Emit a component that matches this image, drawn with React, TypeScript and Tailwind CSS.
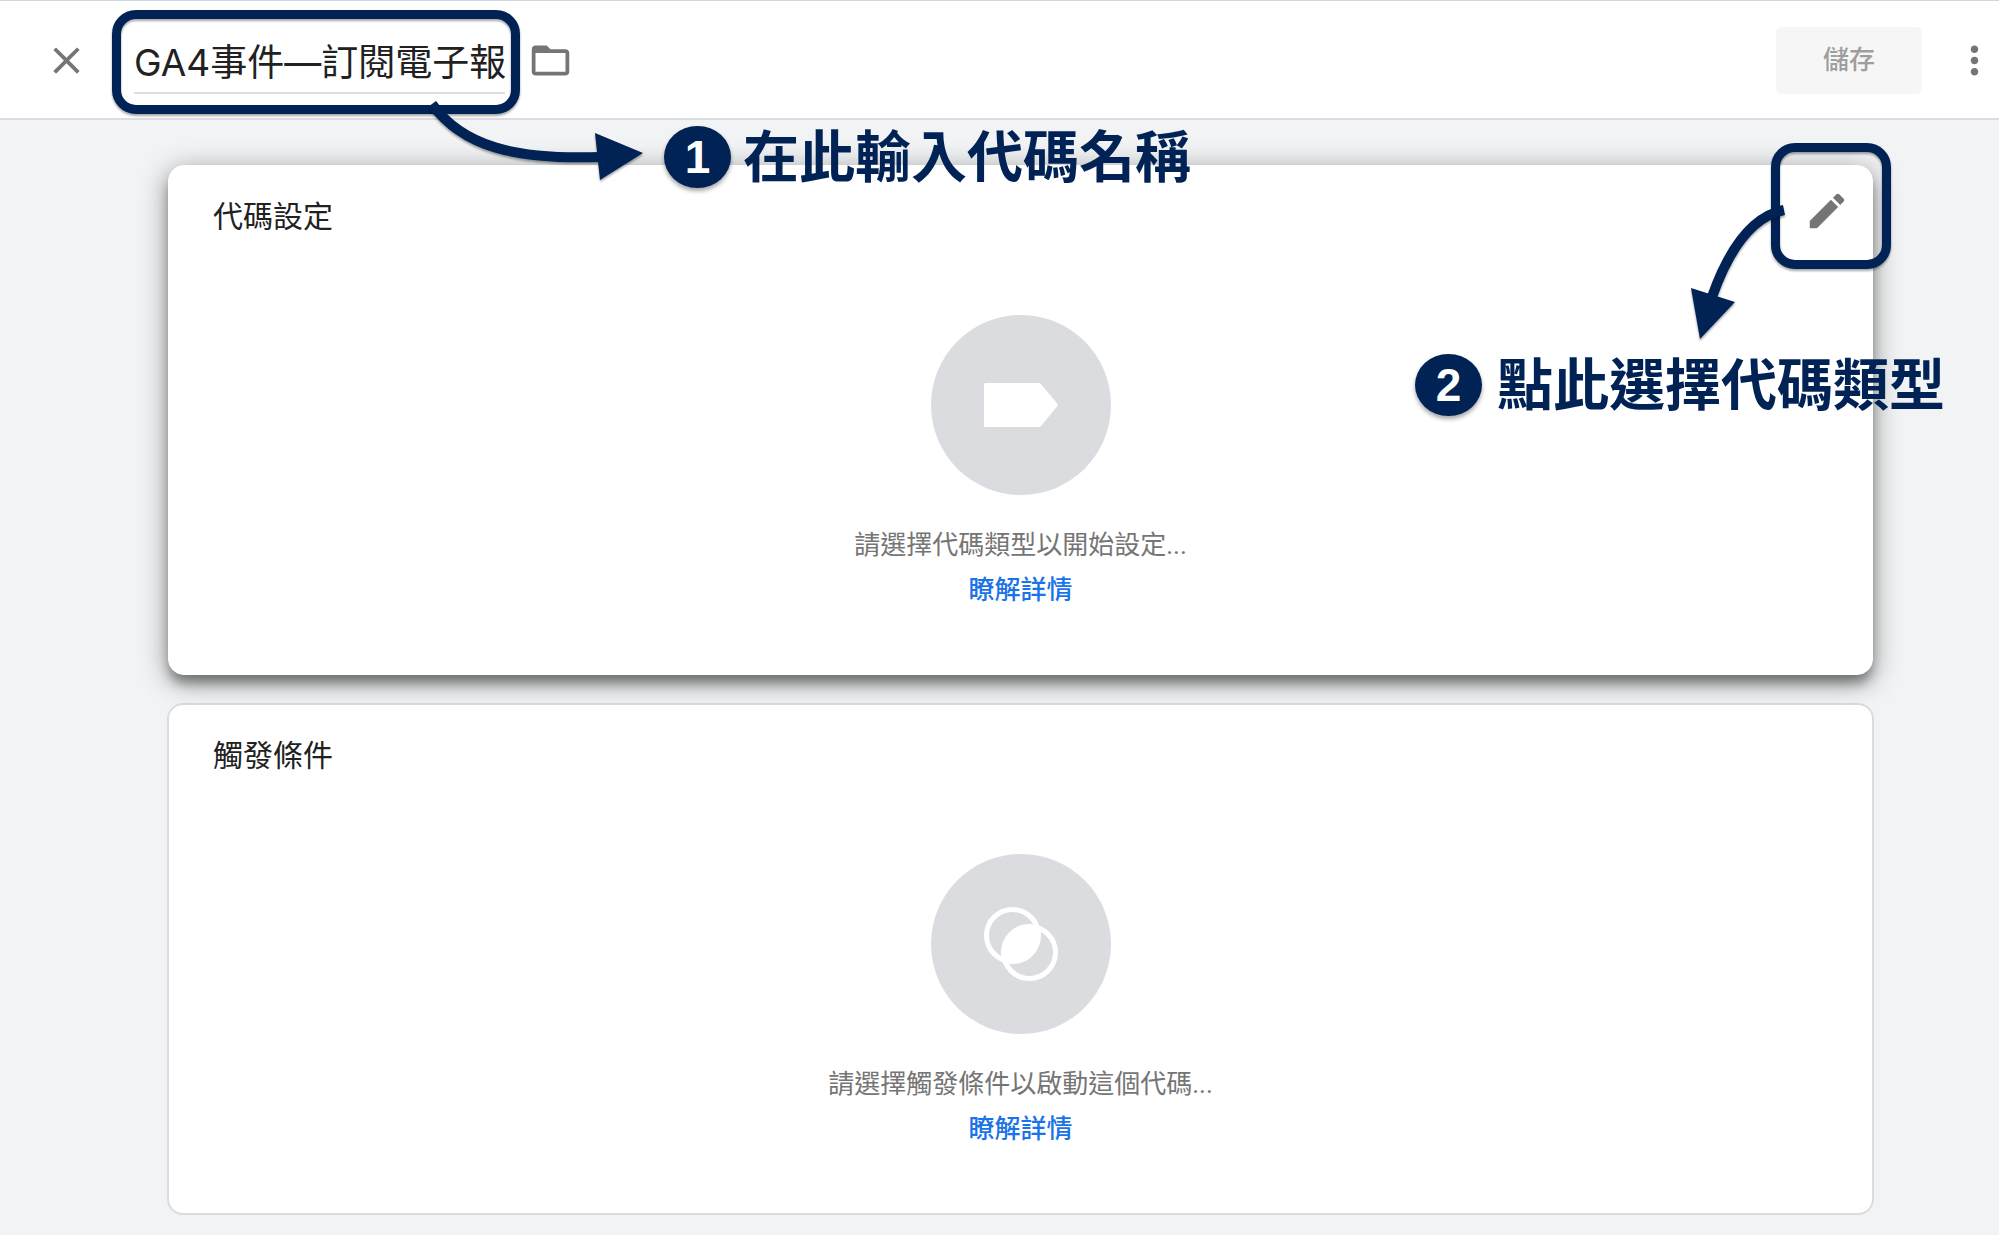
import type { ReactNode } from "react";
import { MdClose, MdEdit, MdFolderOpen, MdMoreVert } from "react-icons/md";

function Callout({ number, className, children }: { number: string; className: string; children: ReactNode }) {
  return (
    <div className={`flex items-start whitespace-nowrap text-[#002255] ${className}`}>
      <span className="flex h-[62px] w-[67px] items-center justify-center rounded-[50%] bg-[#002255] font-['Liberation_Sans'] text-[46px] leading-none font-bold text-white shadow-[0_3px_4px_rgba(0,0,0,0.35)]">
        {number}
      </span>
      <span className="text-[56px] leading-[64px] font-bold">{children}</span>
    </div>
  );
}

function Frame({ className }: { className: string }) {
  return (
    <span
      aria-hidden="true"
      className={`pointer-events-none absolute rounded-3xl border-[9px] border-[#002255] drop-shadow-[0_2px_1px_rgba(0,0,0,0.35)] ${className}`}
    />
  );
}

function TagIcon() {
  return (
    <svg viewBox="0 0 74 44" className="w-[74px]" fill="#fff" aria-hidden="true">
      <path d="M1.5 0H55a3 3 0 0 1 2 1L73.5 21a1.6 1.6 0 0 1 0 2L57 43a3 3 0 0 1-2 1H1.5A1.5 1.5 0 0 1 0 42.5v-41A1.5 1.5 0 0 1 1.5 0Z" />
    </svg>
  );
}

function TriggerIcon() {
  return (
    <svg viewBox="0 0 74 74" className="w-[74px]" fill="none" stroke="#fff" strokeWidth="5" aria-hidden="true">
      <circle cx="28.5" cy="28.5" r="26" />
      <circle cx="45.5" cy="45.5" r="26" />
      <path d="M53.3 20.7A26 26 0 0 1 20.7 53.3A26 26 0 0 1 53.3 20.7Z" fill="#fff" stroke="none" />
    </svg>
  );
}

function Card({
  title,
  hint,
  icon,
  className,
  children,
}: {
  title: string;
  hint: string;
  icon: ReactNode;
  className: string;
  children?: ReactNode;
}) {
  return (
    <section className={`relative rounded-2xl bg-white px-11 pt-[29px] pb-[61px] ${className}`}>
      <h2 className="text-[30px] leading-[44px] text-[#212121]">{title}</h2>
      <div className="mt-[76px] flex flex-col items-center">
        <div className="flex size-[180px] items-center justify-center rounded-full bg-[#dadce0]">{icon}</div>
        <p className="mt-7 text-[26px] leading-[45px] text-[#757575]">{hint}</p>
        <a href="#" className="text-[26px] leading-[45px] font-medium text-[#1a73e8]">
          瞭解詳情
        </a>
      </div>
      {children}
    </section>
  );
}

export default function App() {
  return (
    <div className="relative min-h-screen overflow-hidden bg-[#f1f3f4] font-[Roboto,'Noto_Sans_CJK_TC',sans-serif]">
      <header className="relative z-20 flex h-[120px] items-center border-t border-b-2 border-t-[#cbd8e4] border-b-[#dadce0] bg-white pt-[2px] pr-[2px] pl-11">
        <button type="button" aria-label="關閉" className="text-[#757575]">
          <MdClose size={45} />
        </button>
        <div className="relative ml-[45px] w-[371px]">
          <input
            aria-label="代碼名稱"
            defaultValue="GA4事件—訂閱電子報"
            className="block h-[66px] w-full border-b-2 border-[#dadce0] bg-transparent font-[Inter,'Noto_Sans_CJK_TC',sans-serif] text-[37px] text-[#212121] outline-none"
          />
          <Frame className="-top-[18px] -right-[15px] -bottom-[20px] -left-[22px]" />
        </div>
        <button type="button" aria-label="資料夾" className="ml-[23px] text-[#757575]">
          <MdFolderOpen size={45} />
        </button>
        <button
          type="button"
          disabled
          className="ml-auto h-[67px] w-[146px] rounded-md bg-[#f6f6f6] text-[26px] font-medium text-[#9e9e9e]"
        >
          儲存
        </button>
        <button type="button" aria-label="更多選項" className="ml-[30px] text-[#757575]">
          <MdMoreVert size={45} />
        </button>
      </header>

      <main className="flex flex-col gap-[27px] pt-11 pr-[125px] pb-5 pl-[167px]">
        <Card
          title="代碼設定"
          hint="請選擇代碼類型以開始設定..."
          icon={<TagIcon />}
          className="z-10 m-px border border-white shadow-[0_10px_12px_-2px_rgba(0,0,0,0.35),0_6px_28px_rgba(0,0,0,0.42)]"
        >
          <div className="absolute top-[22px] right-[22px]">
            <button type="button" aria-label="編輯代碼設定" className="block text-[#757575]">
              <MdEdit size={46} />
            </button>
            <Frame className="-top-[45px] -right-[41px] h-[126px] w-[120px]" />
          </div>
          <div className="absolute top-[188px] -right-[73px]">
            <Callout number="2" className="gap-[15px]">
              點此選擇代碼類型
            </Callout>
          </div>
          <svg
            viewBox="1680 200 120 150"
            className="absolute top-[34px] right-[72px] w-[120px] drop-shadow-[0_2px_1px_rgba(0,0,0,0.35)]"
            fill="#002255"
            aria-hidden="true"
          >
            <path d="M1784 210C1755 216 1731 243 1712 297" fill="none" stroke="#002255" strokeWidth="10" />
            <path d="M1691 288L1735 302L1700 339Z" />
          </svg>
        </Card>
        <Card
          title="觸發條件"
          hint="請選擇觸發條件以啟動這個代碼..."
          icon={<TriggerIcon />}
          className="border-2 border-[#dadce0]"
        />
      </main>

      <div className="absolute top-[126px] left-[664px] z-30">
        <Callout number="1" className="gap-3">
          在此輸入代碼名稱
        </Callout>
      </div>
      <svg
        viewBox="420 95 230 95"
        className="absolute top-[95px] left-[420px] z-30 w-[230px] drop-shadow-[0_2px_1px_rgba(0,0,0,0.35)]"
        fill="#002255"
        aria-hidden="true"
      >
        <path d="M432 104C462 146 514 160 600 157" fill="none" stroke="#002255" strokeWidth="10" />
        <path d="M595 133L643 153L600 180Z" />
      </svg>
    </div>
  );
}
